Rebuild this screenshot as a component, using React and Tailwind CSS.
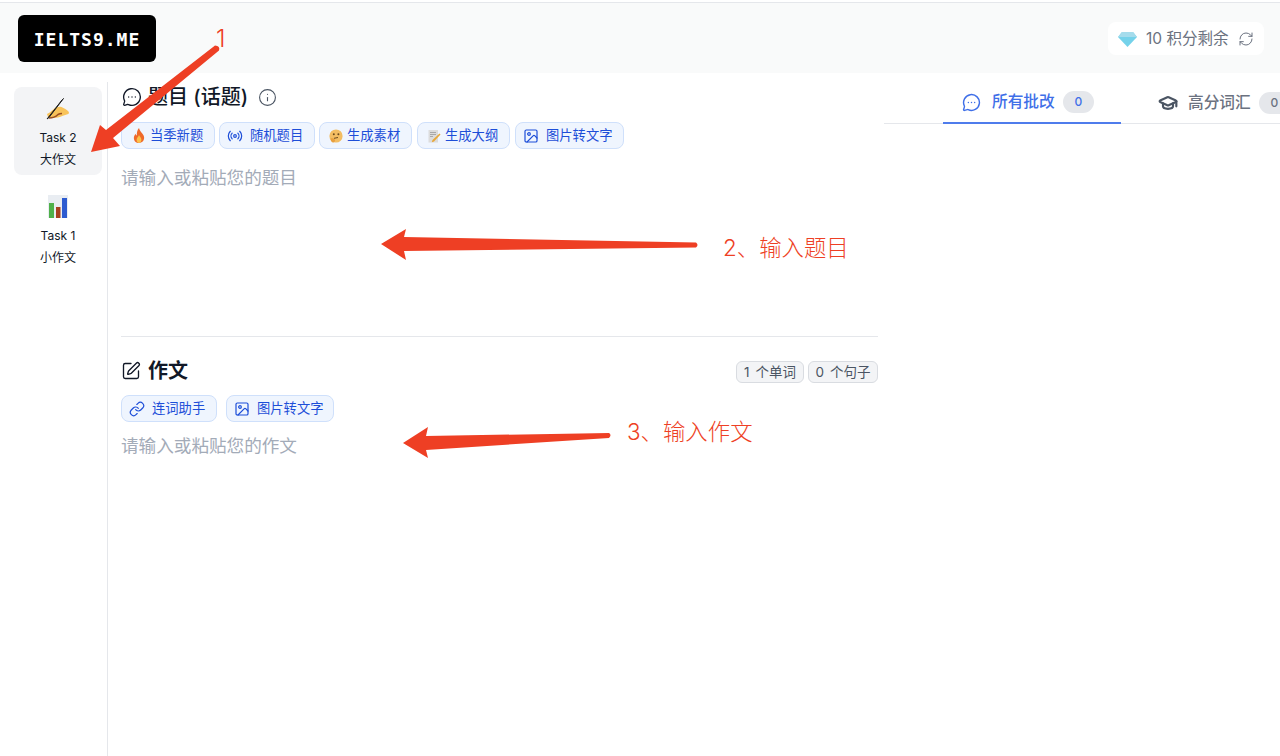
import React from 'react';
import { MessageCircleMore, Info, Radio, Image, Link, SquarePen, RefreshCw, GraduationCap } from 'lucide-react';

const FONT = 'font-[Inter,"Noto_Sans_CJK_SC",sans-serif]';

function FireIcon() {
    return (
        <svg width="12" height="15" viewBox="0 0 14 16" preserveAspectRatio="none">
            <path d="M7 0c.6 2.600 2 3.600 3.400 5.400C11.900 7.200 13 8.600 13 10.500 13 13.800 10.400 16 7 16s-6-2.200-6-5.400c0-2 1-3.400 2-4.600.2 1 .7 1.700 1.500 2.100C4.200 5 5 2 7 0z" fill="#ef6a2a" />
            <path d="M7 7.500c.4 1.500 2.800 2.800 2.800 5 0 1.900-1.300 3.500-2.800 3.500s-2.800-1.500-2.800-3.300C4.200 10.500 6.400 9.500 7 7.500z" fill="#fbc14a" />
        </svg>
    );
}

function ThinkingIcon() {
    return (
        <svg width="14" height="14" viewBox="0 0 14 14">
            <circle cx="7" cy="7" r="6.600" fill="#f3bd62" />
            <circle cx="4.800" cy="5.200" r="1" fill="#6b4a1e" />
            <circle cx="9.400" cy="5.200" r="1" fill="#6b4a1e" />
            <path d="M5 9.300l4-.8" stroke="#6b4a1e" strokeWidth="1" />
            <path d="M1.500 9.500c1.500-.6 3.500 0 4.300 1 .7 1 0 2.800-1.500 3-1.500.1-3-1.800-2.800-4z" fill="#e8a03f" />
        </svg>
    );
}

function MemoIcon() {
    return (
        <svg width="14" height="14" viewBox="0 0 14 14">
            <rect x="1.500" y="1" width="9.500" height="12.500" fill="#dcdcdc" />
            <path d="M3 3.500h6M3 5.500h6M3 7.500h3" stroke="#9a9a9a" strokeWidth="0.800" />
            <path d="M12.500 4.500l1 1-6.500 7-2.200.8.700-2.300z" fill="#e8a838" />
        </svg>
    );
}

function WritingHandIcon() {
    return (
        <svg width="24" height="24" viewBox="0 0 24 24">
            <path d="M1 17c3-1 6-5 9-6.500 2-1 4-1 5.500-.5 2.500 1 5.500 3 7 4.500 1 1.400.3 2.500-1 2.800-3 .6-6 2.500-9.500 3.200-3.500.6-7 .5-10-.5L1 17z" fill="#f8c35a" />
            <path d="M3 21c4 0 7-1.500 9-3.500 1.500-.9 3-1 4-1" stroke="#9b4f22" strokeWidth="1.500" fill="none" />
            <path d="M16 3l1.500-1.500L3 20.500 1 22z" fill="#222" stroke="#222" strokeWidth="1" />
        </svg>
    );
}

function BarChartIcon() {
    return (
        <svg width="20" height="24" viewBox="0 0 20 24">
            <rect width="20" height="23" fill="#e9edf2" />
            <rect x="1" y="8" width="5" height="15" fill="#4fb04a" />
            <rect x="8" y="12" width="4.500" height="11" fill="#a8401f" />
            <rect x="14" y="3" width="5" height="20" fill="#2d5bd0" />
        </svg>
    );
}

function DiamondIcon() {
    return (
        <svg width="19" height="15" viewBox="0 0 19 15">
            <path d="M4 0h11l4 5-9.500 10L0 5z" fill="#75d2ea" />
            <path d="M4 0h11l4 5H0z" fill="#a5dcec" />
        </svg>
    );
}

function Chip({ icon, label, className }) {
    return (
        <button className={`flex h-[27px] shrink-0 items-center rounded-lg border border-[#cfe0fb] bg-[#eff5fe] text-[13.3px] text-[#1d4ed8] ${className}`}>
            {icon}
            <span>{label}</span>
        </button>
    );
}

function TaskTab({ icon, line1, line2, active }) {
    return (
        <div className={`flex h-[88px] w-[88px] flex-col items-center rounded-lg pt-[10px] text-[12px] text-[#111827] ${active ? 'bg-[#f3f4f6]' : ''}`}>
            <div className="flex h-[24px] items-center justify-center">{icon}</div>
            <div className="mt-[6px] leading-[22px]">{line1}</div>
            <div className="leading-[22px]">{line2}</div>
        </div>
    );
}

function Annotations() {
    const color = '#ee3f24';
    return (
        <>
            <svg className="absolute left-0 top-0" width="1280" height="756" fill={color}>
                <path d="M215 45.500L106 130 100 125 91 152 120 146 113 138 219 50.500Q220.500 46 215 45.500z" />
                <path d="M381 244L406 229 404 237 696 242.500Q699 245 696 247.500L404 251 406 260z" />
                <path d="M403 443L428 427 426 436 609 433Q612 435 609 438L426 450 428 458z" />
            </svg>
            <span className="absolute left-[216px] top-[24px] text-[24px] font-light leading-[30px] text-[#ee3f24]">1</span>
            <span className="absolute left-[723px] top-[233px] text-[22.400px] font-light leading-[30px] text-[#ee3f24]">2、输入题目</span>
            <span className="absolute left-[627px] top-[417px] text-[22.400px] font-light leading-[30px] text-[#ee3f24]">3、输入作文</span>
        </>
    );
}

export default function App() {
    return (
        <div className={`relative flex h-[756px] w-[1280px] flex-col overflow-hidden bg-white pt-[2px] ${FONT}`}>
            {/* Top bar */}
            <header className="flex h-[71px] shrink-0 items-center justify-between border-t border-[#e5e7eb] bg-[#f9fafa] pl-[18px] pr-[16px]">
                <div className="flex h-[47px] w-[138px] items-center justify-center rounded-md bg-black pt-[2px] font-['DejaVu_Sans_Mono',monospace] text-[18px] font-bold tracking-[1px] text-white">
                    IELTS9.ME
                </div>
                <div className="flex h-[33px] w-[156px] items-center rounded-lg bg-white pl-[10px] pt-[2px] text-[15.500px] text-[#6b7280]">
                    <DiamondIcon />
                    <span className="ml-[9px]">10 积分剩余</span>
                    <RefreshCw className="ml-[10px]" size={16} strokeWidth={1.500} />
                </div>
            </header>

            <div className="flex min-h-0 flex-1">
                {/* Task switcher */}
                <aside className="mt-[9px] flex w-[108px] shrink-0 flex-col gap-[10px] border-r border-[#e5e7eb] pl-[14px] pt-[5px]">
                    <TaskTab active icon={<WritingHandIcon />} line1="Task 2" line2="大作文" />
                    <TaskTab icon={<BarChartIcon />} line1="Task 1" line2="小作文" />
                </aside>

                {/* Editor */}
                <main className="ml-[13px] mt-[9px] flex w-[757px] shrink-0 flex-col">
                    <div className="flex h-[30px] items-center">
                        <MessageCircleMore className="ml-[1px] text-[#111827]" size={20} strokeWidth={1.600} />
                        <h2 className="ml-[6px] text-[20px] font-medium text-[#111827]">题目 (话题)</h2>
                        <Info className="ml-[10px] text-[#4b5563]" size={19} strokeWidth={1.400} />
                    </div>
                    <div className="mt-[10px] flex">
                        <Chip className="w-[94px] pl-[11px]" icon={<span className="mr-[5px]"><FireIcon /></span>} label="当季新题" />
                        <Chip className="ml-[4px] w-[96px] pl-[7px]" icon={<Radio className="mr-[7px]" size={16} strokeWidth={1.800} />} label="随机题目" />
                        <Chip className="ml-[4px] w-[93px] pl-[9px]" icon={<span className="mr-[4px]"><ThinkingIcon /></span>} label="生成素材" />
                        <Chip className="ml-[5px] w-[93px] pl-[9px]" icon={<span className="mr-[4px]"><MemoIcon /></span>} label="生成大纲" />
                        <Chip className="ml-[5px] w-[109px] pl-[7px]" icon={<Image className="mr-[7px]" size={16} strokeWidth={1.800} />} label="图片转文字" />
                    </div>
                    <textarea
                        className="mt-[17px] h-[170px] w-full resize-none text-[17.600px] leading-[24px] outline-none placeholder:text-[#a3abb8]"
                        placeholder="请输入或粘贴您的题目"
                    />
                    <div className="h-px bg-[#e5e7eb]" />

                    <div className="mt-[19px] flex h-[30px] items-center">
                        <SquarePen className="text-[#111827]" size={20} strokeWidth={1.600} />
                        <h2 className="ml-[7px] text-[20px] font-semibold text-[#111827]">作文</h2>
                        <div className="ml-auto mt-[2px] flex gap-[4px]">
                            <span className="flex h-[22px] w-[68px] items-center justify-center rounded-md border border-[#d9dce1] bg-[#f3f4f6] text-[13.500px] text-[#4b5563] [word-spacing:2px]">1 个单词</span>
                            <span className="flex h-[22px] w-[70px] items-center justify-center rounded-md border border-[#d9dce1] bg-[#f3f4f6] text-[13.500px] text-[#4b5563] [word-spacing:2px]">0 个句子</span>
                        </div>
                    </div>
                    <div className="mt-[9px] flex">
                        <Chip className="w-[96px] pl-[7px]" icon={<Link className="mr-[7px]" size={16} strokeWidth={1.800} />} label="连词助手" />
                        <Chip className="ml-[9px] w-[108px] pl-[7px]" icon={<Image className="mr-[7px]" size={16} strokeWidth={1.800} />} label="图片转文字" />
                    </div>
                    <textarea
                        className="mt-[12px] flex-1 resize-none text-[17.600px] leading-[24px] outline-none placeholder:text-[#a3abb8]"
                        placeholder="请输入或粘贴您的作文"
                    />
                </main>

                {/* Result tabs */}
                <section className="ml-[6px] min-w-0 flex-1 pt-[9px]">
                    <div className="flex h-[42px] items-stretch border-b border-[#e5e7eb] pl-[59px]">
                        <div className="-mb-px flex w-[178px] shrink-0 items-center border-b-2 border-[#4f7cec] pl-[19px] text-[15.700px] font-medium text-[#3f6fe8]">
                            <MessageCircleMore size={19} strokeWidth={1.800} />
                            <span className="ml-[11px]">所有批改</span>
                            <span className="ml-[8px] flex h-[22px] w-[31px] items-center justify-center rounded-full bg-[#e5e7eb] text-[12px]">0</span>
                        </div>
                        <div className="ml-[37px] flex shrink-0 items-center text-[15.700px] font-medium text-[#6b7280]">
                            <GraduationCap className="text-[#4b5563]" size={20} strokeWidth={2.600} />
                            <span className="ml-[10px]">高分词汇</span>
                            <span className="ml-[8px] flex h-[22px] w-[31px] items-center justify-center rounded-full bg-[#e5e7eb] text-[12px]">0</span>
                        </div>
                    </div>
                </section>
            </div>

            <Annotations />
        </div>
    );
}
